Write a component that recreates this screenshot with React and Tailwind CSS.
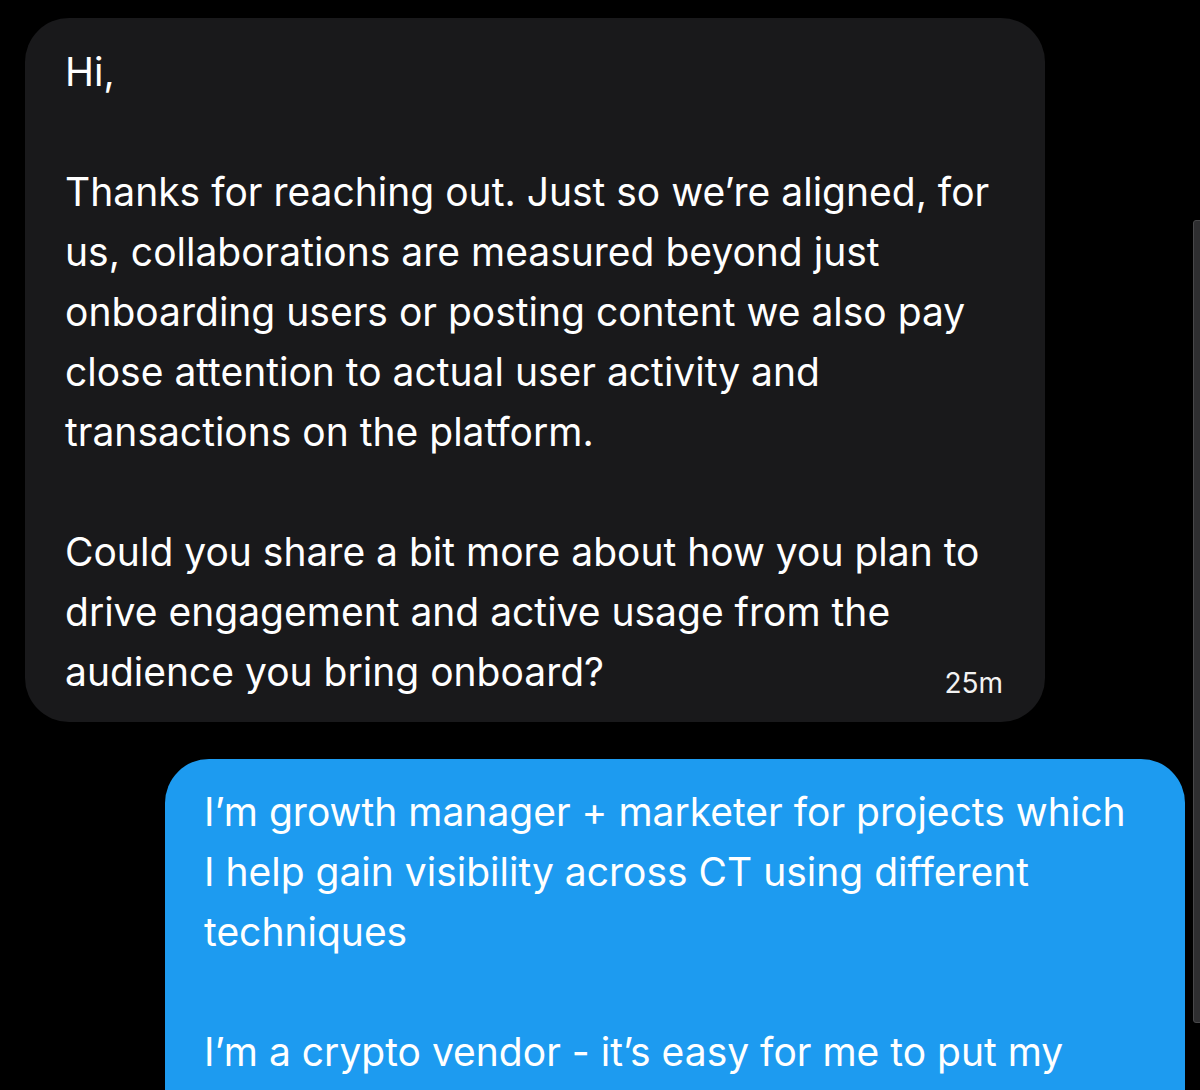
import React from 'react';

const incoming = [
  'Hi,',
  '',
  'Thanks for reaching out. Just so we’re aligned, for',
  'us, collaborations are measured beyond just',
  'onboarding users or posting content we also pay',
  'close attention to actual user activity and',
  'transactions on the platform.',
  '',
  'Could you share a bit more about how you plan to',
  'drive engagement and active usage from the',
];

const outgoing = [
  'I’m growth manager + marketer for projects which',
  'I help gain visibility across CT using different',
  'techniques',
  '',
  'I’m a crypto vendor - it’s easy for me to put my',
];

function Line({ text }) {
  return <div className="h-[60px] whitespace-nowrap">{text || '\u00a0'}</div>;
}

export default function App() {
  return (
    <div
      className="relative w-[1200px] h-[1090px] overflow-hidden bg-black text-white"
      style={{ fontFamily: 'Inter, "Noto Sans", sans-serif' }}
    >
      <div className="flex flex-col pt-[18px]">
        {/* Received message */}
        <div className="ml-[25px] w-[1020px] rounded-[44px] bg-[#19191b] pl-[40px] pr-[42px] pt-[24px] pb-[20px] text-[39px] leading-[60px]">
          {incoming.map((t, i) => (
            <Line key={i} text={t} />
          ))}
          <div className="flex items-end justify-between h-[60px]">
            <span className="whitespace-nowrap">audience you bring onboard?</span>
            <span className="text-[28px] leading-[30px] mb-[4px] text-[#f2f2f2]">25m</span>
          </div>
        </div>

        {/* Sent message */}
        <div className="mt-[37px] ml-[165px] w-[1020px] rounded-[44px] bg-[#1d9bf0] pl-[39px] pr-[40px] pt-[23px] pb-[80px] text-[39px] leading-[60px]">
          {outgoing.map((t, i) => (
            <Line key={i} text={t} />
          ))}
        </div>
      </div>

      {/* scrollbar */}
      <div className="absolute left-[1193px] top-[220px] h-[803px] w-[8px] rounded-l-[3px] bg-[#2e2e30] border border-[#48484a]" />
    </div>
  );
}
